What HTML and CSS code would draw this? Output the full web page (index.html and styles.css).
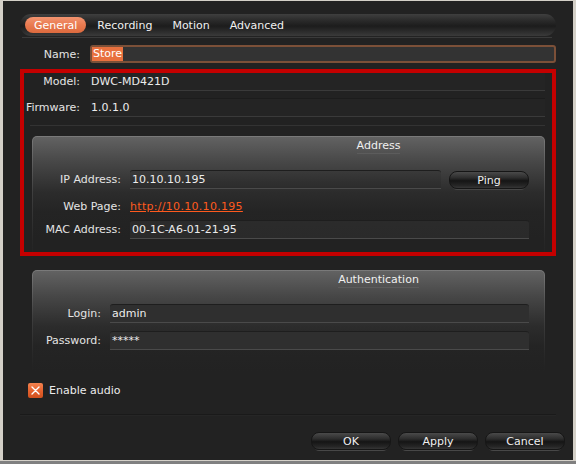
FILE: index.html
```html
<!DOCTYPE html>
<html>
<head>
<meta charset="utf-8">
<link rel="stylesheet" href="styles.css">
</head>
<body>
<div class="window">
  <div class="tabbar">
    <span class="tab active">General</span>
    <span class="tab">Recording</span>
    <span class="tab">Motion</span>
    <span class="tab">Advanced</span>
  </div>
  <div class="tabline"></div>

  <div class="row name-row">
    <span class="lbl">Name:</span>
    <div class="input-name"><span class="sel">Store</span></div>
  </div>
  <div class="row ro-row model-row">
    <span class="lbl">Model:</span>
    <div class="ro">DWC-MD421D</div>
  </div>
  <div class="row ro-row fw-row">
    <span class="lbl">Firmware:</span>
    <div class="ro">1.0.1.0</div>
  </div>
  <div class="divider"></div>

  <div class="group address">
    <div class="group-inner">
      <div class="gtitle"><span>Address</span></div>
      <div class="grow ip-row">
        <span class="glbl">IP Address:</span>
        <div class="field ip-field">10.10.10.195</div>
        <button class="btn ping">Ping</button>
      </div>
      <div class="grow web-row">
        <span class="glbl">Web Page:</span>
        <a class="link" href="#">http://10.10.10.195</a>
      </div>
      <div class="grow mac-row">
        <span class="glbl">MAC Address:</span>
        <div class="field mac-field">00-1C-A6-01-21-95</div>
      </div>
    </div>
  </div>

  <div class="group auth">
    <div class="group-inner">
      <div class="gtitle"><span>Authentication</span></div>
      <div class="grow login-row">
        <span class="glbl">Login:</span>
        <div class="field">admin</div>
      </div>
      <div class="grow pass-row">
        <span class="glbl">Password:</span>
        <div class="field">*****</div>
      </div>
    </div>
  </div>

  <div class="check-row">
    <span class="checkbox">
      <svg width="15" height="15" viewBox="0 0 15 15"><path d="M4 4 L11 11 M11 4 L4 11" stroke="#fff" stroke-width="1.4" stroke-linecap="round"/></svg>
    </span>
    <span class="check-label">Enable audio</span>
  </div>

  <div class="sep"></div>

  <div class="buttons">
    <button class="btn">OK</button>
    <button class="btn">Apply</button>
    <button class="btn">Cancel</button>
  </div>

  <div class="highlight"></div>
</div>
</body>
</html>
```
FILE: styles.css
```css
html, body {
  margin: 0;
  padding: 0;
}
body {
  width: 576px;
  height: 464px;
  background: linear-gradient(to bottom, #d4d0c8 0, #d4d0c8 461px, #808080 461px);
  font-family: "DejaVu Sans", sans-serif;
  font-size: 11px;
  color: #e8e8e8;
  overflow: hidden;
}
.window {
  position: relative;
  margin: 1px 0 0 3px;
  width: 570px;
  height: 459px;
  box-sizing: border-box;
  padding: 13px 17px 0 17px;
  background: #222222;
}
.tabbar {
  height: 22px;
  border-radius: 11px;
  background: linear-gradient(to bottom, #3f3f3f 0%, #2a2a2a 30%, #1c1c1c 55%, #2c2c2c 80%, #3a3a3a 100%);
  display: flex;
  align-items: center;
  padding-left: 5px;
  gap: 2px;
}
.tab {
  height: 16px;
  line-height: 17px;
  padding: 0 9px;
  border-radius: 8px;
  color: #f0f0f0;
}
.tab.active {
  background: linear-gradient(to bottom, #f39470 0%, #e97a50 50%, #dd6a3e 100%);
  color: #fff;
}
.tabline {
  height: 1px;
  margin: 1px 4px 0 2px;
  background: #3a3a3a;
}
.row {
  display: flex;
  align-items: center;
}
.lbl {
  width: 60px;
  text-align: right;
  margin-right: 10px;
  white-space: nowrap;
  color: #e4e4e4;
}
.name-row {
  margin-top: 7px;
}
.input-name {
  width: 466px;
  height: 18px;
  box-sizing: border-box;
  border: 2px solid #7c5038;
  border-radius: 3px;
  background: #333333;
  display: flex;
  align-items: center;
  padding-left: 0;
}
.sel {
  background: #e8703e;
  color: #fff;
  line-height: 14px;
  padding: 0 1px;
}
.model-row {
  margin-top: 9px;
}
.fw-row {
  margin-top: 7px;
}
.ro {
  width: 455px;
  height: 19px;
  box-sizing: border-box;
  border-top: 1px solid #1c1c1c;
  border-bottom: 1px solid #3a3a3a;
  background: #242424;
  line-height: 17px;
  padding-left: 1px;
  color: #ececec;
}
.divider {
  height: 1px;
  margin: 8px 11px 0 10px;
  background: #333333;
}
.group {
  margin-left: 12px;
  width: 513px;
  padding: 1px 1px 0 1px;
  box-sizing: border-box;
  border-radius: 5px 5px 0 0;
  background: linear-gradient(to bottom, #7a7a7a 0%, #404040 45%, rgba(48,48,48,0.4) 85%, rgba(34,34,34,0) 100%);
}
.group-inner {
  border-radius: 4px 4px 0 0;
  background: linear-gradient(to bottom, #626262 0px, #474747 25px, #2c2c2c 55px, #242424 75px, #222222 100px);
}
.address {
  margin-top: 10px;
}
.address .group-inner {
  padding-bottom: 20px;
}
.auth {
  margin-top: 11px;
}
.auth .group-inner {
  padding-bottom: 21px;
}
.gtitle {
  height: 17px;
  line-height: 17px;
  padding-left: 180px;
  text-align: center;
  color: #f0f0f0;
}
.gtitle span {
  display: inline-block;
  line-height: 15px;
  border-bottom: 1px solid rgba(255,255,255,0.07);
}
.grow {
  display: flex;
  align-items: center;
}
.glbl {
  width: 88px;
  margin-right: 9px;
  text-align: right;
  white-space: nowrap;
  color: #e4e4e4;
}
.field {
  width: 419px;
  height: 19px;
  box-sizing: border-box;
  border-top: 1px solid #1e1e1e;
  border-bottom: 1px solid #4a4a4a;
  border-radius: 3px 3px 0 0;
  background: rgba(255,255,255,0.04);
  line-height: 17px;
  padding-left: 2px;
  color: #ececec;
}
.ip-row {
  margin-top: 16px;
}
.ip-field {
  width: 311px;
  margin-right: 8px;
  background: rgba(0,0,0,0.08);
}
.mac-field {
  width: 399px;
}
.web-row {
  margin-top: 8px;
  height: 18px;
}
.link {
  color: #ff5a1e;
  text-decoration: underline;
  letter-spacing: 0.3px;
}
.mac-row {
  margin-top: 5px;
}
.auth .glbl {
  width: 68px;
}
.login-row {
  margin-top: 16px;
}
.pass-row {
  margin-top: 8px;
}
.auth .field {
  background: #2f2f2f;
}
.btn {
  width: 80px;
  height: 18px;
  padding: 0;
  box-sizing: border-box;
  border: 1px solid #161616;
  border-radius: 8px;
  background: linear-gradient(to bottom, #4a4a4a 0%, #2e2e2e 35%, #151515 55%, #262626 85%, #363636 100%);
  color: #f0f0f0;
  font-family: "DejaVu Sans", sans-serif;
  font-size: 11px;
  line-height: 17px;
  box-shadow: 0 5px 0 -4px #474747;
}
.check-row {
  margin-top: 12px;
  margin-left: 8px;
  display: flex;
  align-items: center;
  height: 15px;
}
.checkbox {
  width: 15px;
  height: 15px;
  border-radius: 2px;
  background: linear-gradient(to bottom, #f48350 0%, #e4602c 55%, #d0501e 100%);
  display: block;
}
.checkbox svg {
  display: block;
}
.check-label {
  margin-left: 6px;
  color: #ececec;
}
.sep {
  margin-top: 16px;
  height: 1px;
  background: #1a1a1a;
  box-shadow: 0 1px 0 #262626;
}
.buttons {
  margin-top: 17px;
  margin-right: -9px;
  display: flex;
  justify-content: flex-end;
  gap: 7px;
}
.highlight {
  position: absolute;
  left: 17px;
  top: 68px;
  width: 536px;
  height: 187px;
  box-sizing: border-box;
  border: 4px solid #c40000;
  pointer-events: none;
}
```
